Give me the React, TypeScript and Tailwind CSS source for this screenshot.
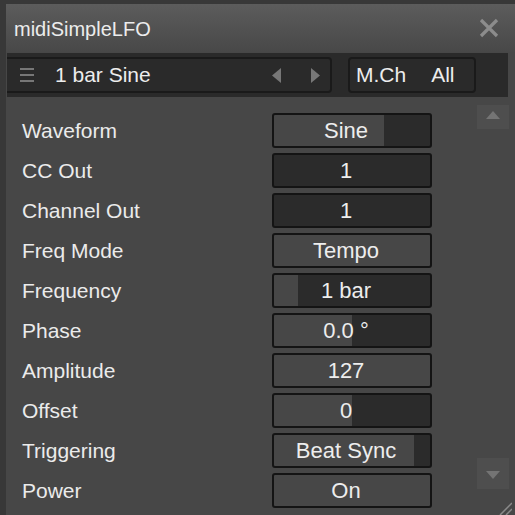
import React from "react";

type Row = { label: string; value: string; fill: number };

const rows: Row[] = [
  { label: "Waveform", value: "Sine", fill: 110 },
  { label: "CC Out", value: "1", fill: 0 },
  { label: "Channel Out", value: "1", fill: 0 },
  { label: "Freq Mode", value: "Tempo", fill: 156 },
  { label: "Frequency", value: "1 bar", fill: 24 },
  { label: "Phase", value: "0.0 °", fill: 78 },
  { label: "Amplitude", value: "127", fill: 156 },
  { label: "Offset", value: "0", fill: 78 },
  { label: "Triggering", value: "Beat Sync", fill: 140 },
  { label: "Power", value: "On", fill: 156 },
];

function Control({ value, fill }: { value: string; fill: number }) {
  return (
    <div
      className="w-[160px] h-[35px] border-2 border-[#141414] rounded-[3px] flex items-center justify-center pr-[12px] text-[22px] text-[#ededed]"
      style={{
        background: `linear-gradient(to right, #474747 ${fill}px, #2b2b2b ${fill}px)`,
      }}
    >
      {value}
    </div>
  );
}

export default function App() {
  return (
    <div
      className="relative w-[515px] h-[515px] bg-[#383838] pl-[6px] pt-[4px] flex flex-col overflow-hidden"
      style={{ fontFamily: '"Liberation Sans", Arial, sans-serif' }}
    >
      {/* title bar */}
      <div className="h-[48px] bg-gradient-to-b from-[#5c5c5c] to-[#484848] flex items-center justify-between pl-[8px] pr-[16px] shrink-0">
        <span className="text-[20px] text-[#ececec] mt-[2px]">midiSimpleLFO</span>
        <svg width="20" height="20" viewBox="0 0 20 20">
          <path d="M2 2 L18 18 M18 2 L2 18" stroke="#8c8c8c" strokeWidth="3.2" />
        </svg>
      </div>
      {/* preset bar */}
      <div className="bg-[#474747] pr-[7px] pt-[1px] pb-[3px] shrink-0">
        <div className="h-[44px] ml-[1px] bg-[#2a2a2a] flex items-center gap-[16px] pr-[32px]">
          <div className="w-[325px] h-[36px] border-2 border-l-0 border-[#1a1a1a] rounded-r-[4px] flex items-center">
            <div className="w-[14px] ml-[13px] flex flex-col gap-[4px]">
              <div className="h-[2px] bg-[#777]" />
              <div className="h-[2px] bg-[#777]" />
              <div className="h-[2px] bg-[#777]" />
            </div>
            <span className="ml-[21px] text-[21px] text-[#ededed]">1 bar Sine</span>
            <div className="ml-auto flex items-center gap-[30px] mr-[10px]">
              <svg width="9" height="15" viewBox="0 0 9 15">
                <path d="M9 0 L0 7.5 L9 15 Z" fill="#777" />
              </svg>
              <svg width="9" height="15" viewBox="0 0 9 15">
                <path d="M0 0 L9 7.5 L0 15 Z" fill="#777" />
              </svg>
            </div>
          </div>
          <div className="w-[128px] h-[36px] border-2 border-[#1a1a1a] rounded-[4px] flex items-center text-[21px] text-[#ededed]">
            <span className="ml-[6px]">M.Ch</span>
            <span className="ml-[25px]">All</span>
          </div>
        </div>
      </div>
      {/* body */}
      <div className="flex-1 bg-[#474747] flex pt-[5px]">
        <div className="flex flex-col gap-[5px] pl-[16px] pt-[8px]">
          {rows.map((r) => (
            <div key={r.label} className="flex items-center h-[35px]">
              <span className="w-[250px] text-[21px] text-[#ebebeb]">{r.label}</span>
              <Control value={r.value} fill={r.fill} />
            </div>
          ))}
        </div>
        <div className="ml-[45px] w-[32px] flex flex-col justify-between pb-[26px]">
          <div className="h-[24px] bg-[#4e4e4e] flex items-start justify-center pt-[6px]">
            <svg width="14" height="8" viewBox="0 0 14 8">
              <path d="M0 8 L7 0 L14 8 Z" fill="#747474" />
            </svg>
          </div>
          <div className="h-[31px] bg-[#4e4e4e] flex items-start justify-center pt-[13px]">
            <svg width="14" height="8" viewBox="0 0 14 8">
              <path d="M0 0 L7 8 L14 0 Z" fill="#747474" />
            </svg>
          </div>
        </div>
      </div>
      <svg className="absolute right-[3px] bottom-0" width="13" height="14" viewBox="0 0 13 14">
        <path d="M1 14 L13 2 M7 14 L13 8" stroke="#8a8a8a" strokeWidth="1.5" />
      </svg>
    </div>
  );
}
